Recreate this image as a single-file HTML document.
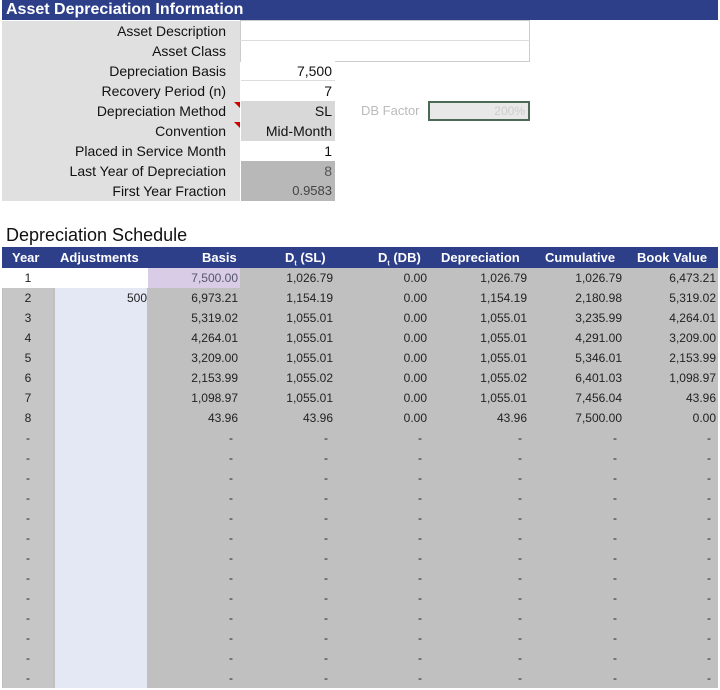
<!DOCTYPE html>
<html><head><style>
body{margin:0;width:720px;height:690px;background:#fff;position:relative;overflow:hidden;font-family:"Liberation Sans",sans-serif;}
div{position:absolute;box-sizing:border-box}
.hb{background:#2e3f8a;color:#fff;font-weight:bold}
.l{left:2px;width:238px;height:20px;text-align:right;padding-right:14px;font-size:14px;line-height:20px;color:#111;background:#e0e0e0}
.v{left:241px;width:94px;height:20px;text-align:right;padding-right:3px;font-size:14px;line-height:20px;color:#111}
.r{height:20px;font-size:12px;line-height:20px;color:#222;text-align:right}
.h{top:247px;height:21px;font-size:13px;line-height:21px;color:#fff;font-weight:bold}
.tri{width:0;height:0;border-top:6px solid #c00;border-left:6px solid transparent}
</style></head><body>
<div class="hb" style="left:2px;top:0;width:716px;height:20px;font-size:16px;line-height:20px;padding-left:4px">Asset Depreciation Information</div>
<div class="l" style="top:21px">Asset Description</div>
<div class="l" style="top:41px">Asset Class</div>
<div class="l" style="top:61px">Depreciation Basis</div>
<div class="l" style="top:81px">Recovery Period (n)</div>
<div class="l" style="top:101px">Depreciation Method</div>
<div class="l" style="top:121px">Convention</div>
<div class="l" style="top:141px">Placed in Service Month</div>
<div class="l" style="top:161px">Last Year of Depreciation</div>
<div class="l" style="top:181px">First Year Fraction</div>
<div style="left:240px;top:20px;width:290px;height:42px;border:1px solid #ccc;background:#fff"></div>
<div style="left:240px;top:40px;width:290px;height:1px;background:#ddd"></div>
<div class="v" style="top:61px;background:#fff;border-bottom:1px solid #ddd">7,500</div>
<div class="v" style="top:81px;background:#fff">7</div>
<div class="v" style="top:101px;background:#d8d8d8">SL</div>
<div class="v" style="top:121px;background:#d8d8d8">Mid-Month</div>
<div class="v" style="top:141px;background:#fff">1</div>
<div class="v" style="top:161px;background:#b8b8b8;color:#555">8</div>
<div class="v" style="top:181px;background:#b8b8b8;color:#444;font-size:13px">0.9583</div>
<div class="tri" style="left:234px;top:102px"></div>
<div class="tri" style="left:234px;top:122px"></div>
<div style="left:361px;top:101px;height:20px;line-height:20px;font-size:13px;color:#bbb">DB Factor</div>
<div style="left:428px;top:101px;width:102px;height:20px;border:2px solid #4a6a56;background:#e8e8e8;text-align:right;padding-right:3px;font-size:12px;line-height:16px;color:#ccc">200%</div>
<div style="left:6px;top:224px;font-size:18px;line-height:22px;color:#111">Depreciation Schedule</div>
<div class="hb" style="left:2px;top:247px;width:716px;height:21px"></div>
<div class="h" style="left:12px">Year</div>
<div class="h" style="left:60px">Adjustments</div>
<div class="h" style="left:202px">Basis</div>
<div class="h" style="left:285px">D<sub style="font-size:7px">t</sub> (SL)</div>
<div class="h" style="left:378px">D<sub style="font-size:7px">t</sub> (DB)</div>
<div class="h" style="left:441px">Depreciation</div>
<div class="h" style="left:545px">Cumulative</div>
<div class="h" style="left:637px">Book Value</div>
<div style="left:2px;top:268px;width:716px;height:420px;background:#c0c0c0"></div>
<div style="left:3px;top:268px;width:50px;height:420px;background:#c6c6c6"></div>
<div style="left:55px;top:288px;width:92px;height:400px;background:#e4e8f4"></div>
<div style="left:2px;top:268px;width:146px;height:20px;background:#fff"></div>
<div style="left:148px;top:268px;width:92px;height:20px;background:#d8cce6"></div>
<div id="rows"></div>
<script>
var d=[["1","","7,500.00","1,026.79","0.00","1,026.79","1,026.79","6,473.21"],
["2","500","6,973.21","1,154.19","0.00","1,154.19","2,180.98","5,319.02"],
["3","","5,319.02","1,055.01","0.00","1,055.01","3,235.99","4,264.01"],
["4","","4,264.01","1,055.01","0.00","1,055.01","4,291.00","3,209.00"],
["5","","3,209.00","1,055.01","0.00","1,055.01","5,346.01","2,153.99"],
["6","","2,153.99","1,055.02","0.00","1,055.02","6,401.03","1,098.97"],
["7","","1,098.97","1,055.01","0.00","1,055.01","7,456.04","43.96"],
["8","","43.96","43.96","0.00","43.96","7,500.00","0.00"]];
for(var i=0;i<13;i++)d.push(["-","","-","-","-","-","-","-"]);
var R=[0,147,238,333,427,527,622,716],h="";
d.forEach(function(r,i){var t=268+i*20;
h+='<div class="r" style="left:3px;width:50px;top:'+t+'px;text-align:center">'+r[0]+'</div>';
for(var c=1;c<8;c++){var s=r[c]=="-"?';padding-right:5px':'';
h+='<div class="r" style="left:'+(R[c]-90)+'px;width:90px;top:'+t+'px'+(i==0&&c==2?';color:#556':'')+s+'">'+r[c]+'</div>';}});
document.getElementById('rows').outerHTML=h;
</script>
</body></html>
